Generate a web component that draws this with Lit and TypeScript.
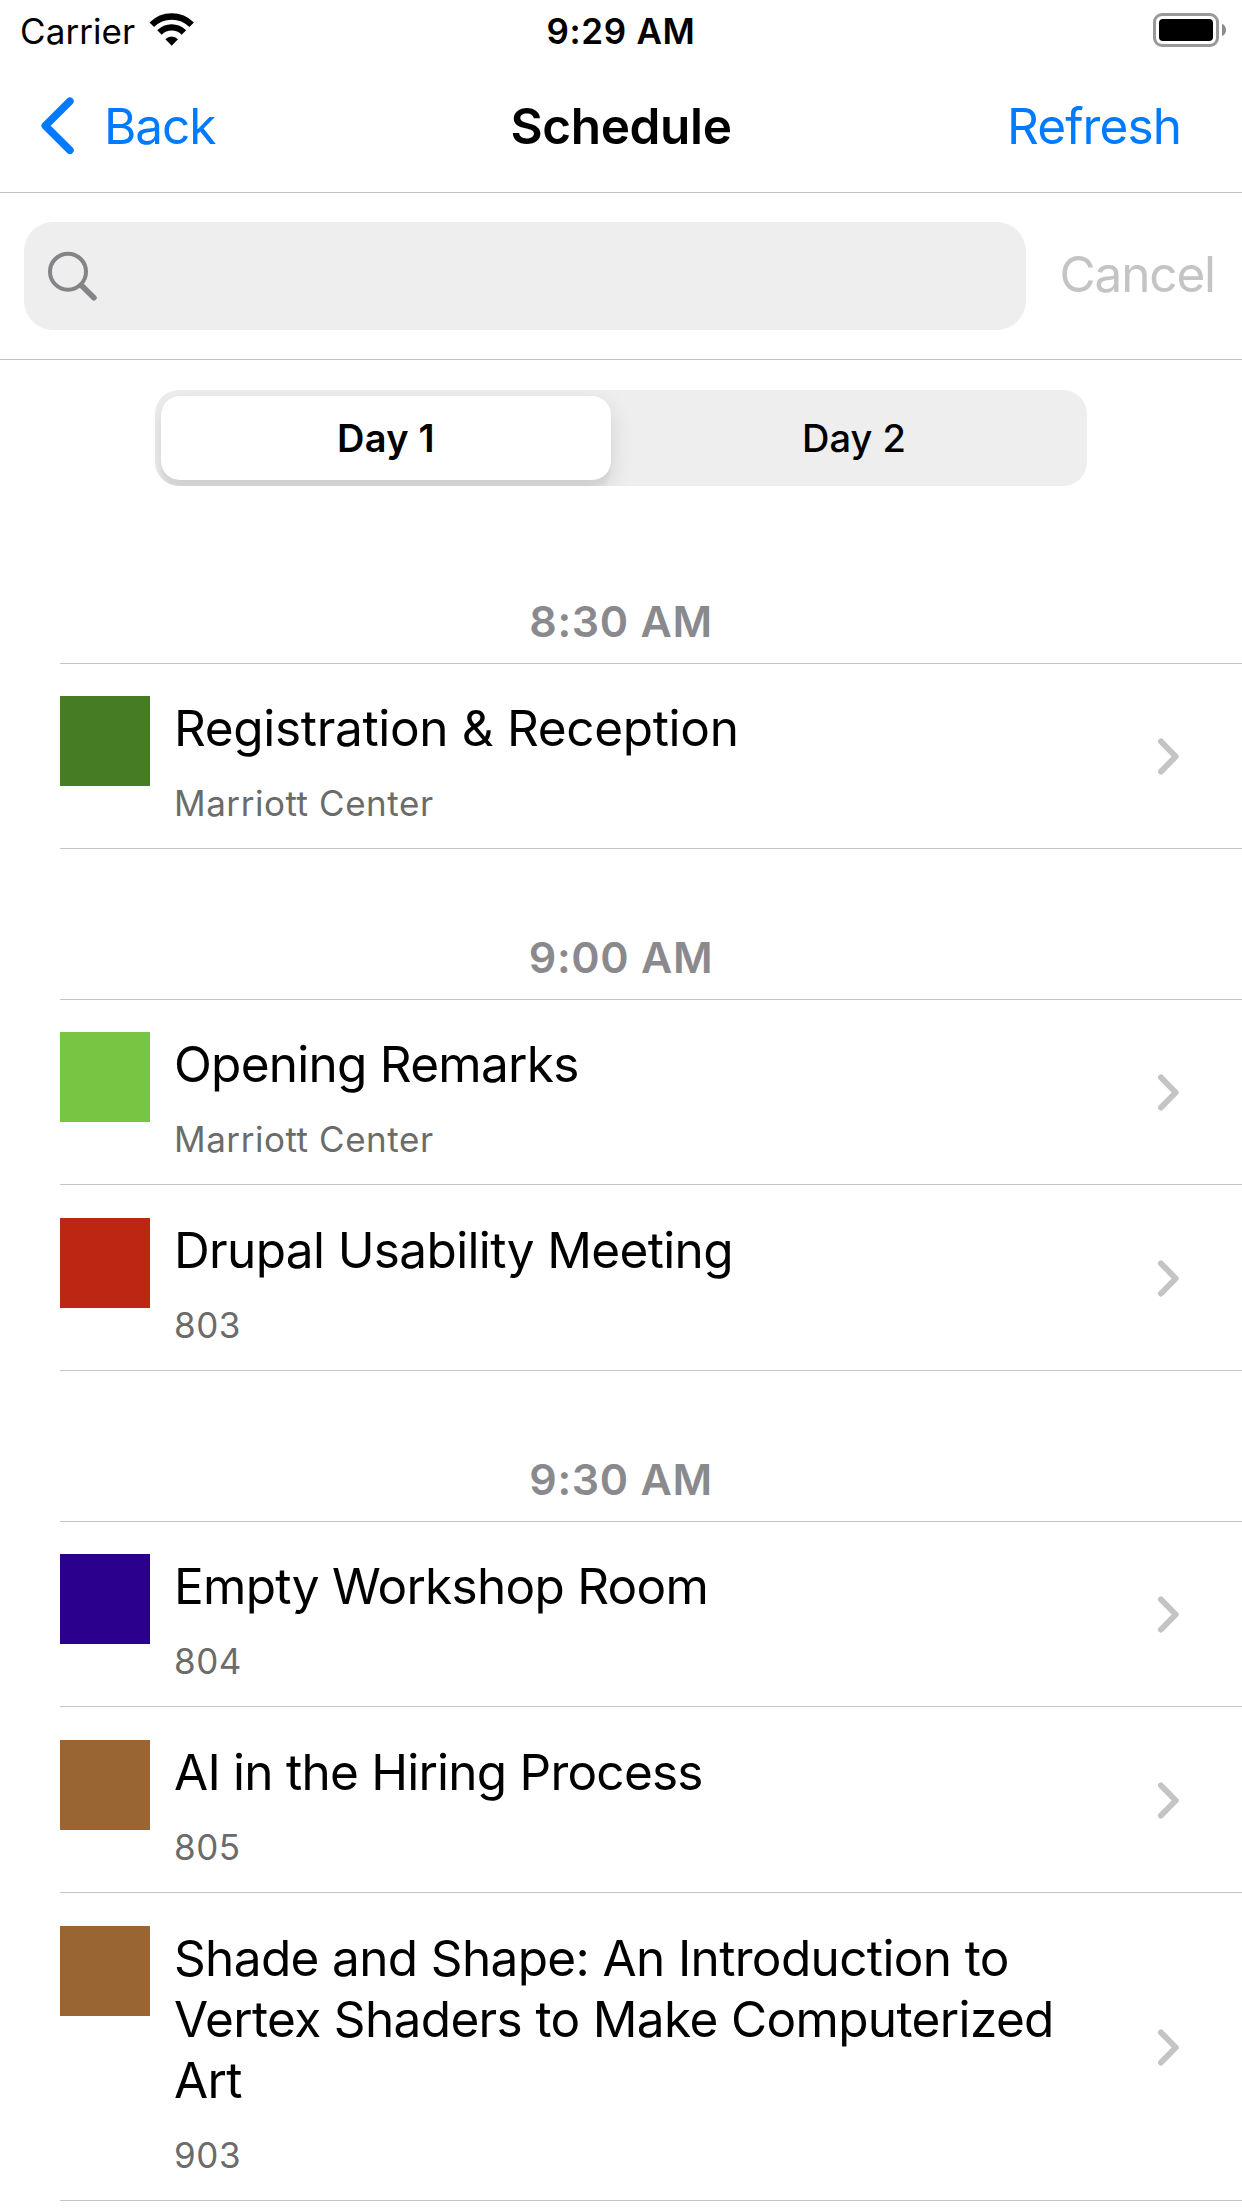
import { LitElement, html, css } from 'lit';
import { customElement, property, state } from 'lit/decorators.js';
import { classMap } from 'lit/directives/class-map.js';
import { styleMap } from 'lit/directives/style-map.js';

interface Session {
  title: string;
  room: string;
  color: string;
  tracking: number;
}

interface Slot {
  time: string;
  sessions: Session[];
}

const SLOTS: Slot[] = [
  {
    time: '8:30 AM',
    sessions: [
      { title: 'Registration & Reception', room: 'Marriott Center', color: '#467c24', tracking: -0.33 },
    ],
  },
  {
    time: '9:00 AM',
    sessions: [
      { title: 'Opening Remarks', room: 'Marriott Center', color: '#78c544', tracking: -0.74 },
      { title: 'Drupal Usability Meeting', room: '803', color: '#bc2713', tracking: -0.64 },
    ],
  },
  {
    time: '9:30 AM',
    sessions: [
      { title: 'Empty Workshop Room', room: '804', color: '#2b008c', tracking: -0.73 },
      { title: 'AI in the Hiring Process', room: '805', color: '#996633', tracking: -0.76 },
      {
        title: 'Shade and Shape: An Introduction to Vertex Shaders to Make Computerized Art',
        room: '903',
        color: '#996633',
        tracking: -0.64,
      },
    ],
  },
];

@customElement('status-bar')
class StatusBar extends LitElement {
  static styles = css`
    :host {
      display: grid;
      grid-template-columns: 1fr auto 1fr;
      align-items: start;
      height: 60px;
      padding: 0 16px 0 20px;
      box-sizing: border-box;
      font-size: 35px;
      line-height: 42px;
    }
    .left {
      display: flex;
      gap: 14px;
      padding-top: 10px;
      letter-spacing: 0.08px;
    }
    .wifi {
      width: 46px;
      height: 34px;
      margin-top: 3px;
    }
    .clock {
      padding-top: 10px;
      font-weight: 600;
      letter-spacing: 0.7px;
      transform: translateX(-2px);
    }
    .right {
      display: flex;
      justify-content: flex-end;
      padding-top: 13px;
    }
    .battery {
      width: 73px;
      height: 34px;
    }
  `;

  render() {
    return html`
      <div class="left">
        <span>Carrier</span>
        <svg class="wifi" viewBox="0 0 46 34" fill="none" stroke="#000" stroke-width="6.4">
          <path d="M2.76 11.76A28.2 28.2 0 0 1 42.64 11.76" />
          <path d="M10.47 19.47A17.3 17.3 0 0 1 34.93 19.47" />
          <path d="M16.4 26.2A8.8 8.8 0 0 1 29 26.2L22.7 32.7Z" fill="#000" stroke="none" />
        </svg>
      </div>
      <div class="clock">9:29 AM</div>
      <div class="right">
        <svg class="battery" viewBox="0 0 73 34">
          <rect x="1.5" y="1.5" width="63" height="31" rx="7.5" fill="none" stroke="#999" stroke-width="3" />
          <rect x="6" y="6" width="54" height="22" rx="4" fill="#000" />
          <path d="M69 10.8C71.6 12 73 14.2 73 17s-1.4 5-4 6.2Z" fill="#8c8c8c" />
        </svg>
      </div>
    `;
  }
}

@customElement('nav-bar')
class NavBar extends LitElement {
  static styles = css`
    :host {
      display: grid;
      grid-template-columns: 1fr auto 1fr;
      align-items: center;
      height: 133px;
      padding: 0 61px 0 40px;
      box-sizing: border-box;
      border-bottom: 1px solid #c3c3c5;
      font-size: 49.5px;
      line-height: 60px;
    }
    .back {
      display: flex;
      align-items: center;
      gap: 28px;
      color: #007aff;
      letter-spacing: -1.1px;
    }
    .arrow {
      width: 36px;
      height: 60px;
    }
    .title {
      font-weight: 600;
      letter-spacing: -0.36px;
      transform: translateX(10.5px);
    }
    .refresh {
      color: #007aff;
      letter-spacing: -0.92px;
      text-align: right;
    }
  `;

  render() {
    return html`
      <div class="back">
        <svg class="arrow" viewBox="0 0 36 60" fill="none" stroke="#007aff" stroke-width="7.6"
          stroke-linecap="round" stroke-linejoin="round">
          <path d="M29.9 5.3L5.3 29.8L29.9 54.2" />
        </svg>
        <span>Back</span>
      </div>
      <div class="title">Schedule</div>
      <div class="refresh">Refresh</div>
    `;
  }
}

@customElement('search-bar')
class SearchBar extends LitElement {
  static styles = css`
    :host {
      display: flex;
      align-items: center;
      gap: 33.5px;
      height: 167px;
      padding: 0 24px;
      box-sizing: border-box;
      border-bottom: 1px solid #c3c3c5;
    }
    .field {
      display: flex;
      align-items: center;
      width: 1002px;
      height: 108px;
      padding-left: 22px;
      box-sizing: border-box;
      border-radius: 29px;
      background: #eee;
    }
    .glass {
      width: 54px;
      height: 54px;
    }
    .cancel {
      padding-bottom: 4px;
      font-size: 49.5px;
      line-height: 60px;
      letter-spacing: -1.15px;
      color: #c4c4c4;
    }
  `;

  render() {
    return html`
      <div class="field">
        <svg class="glass" viewBox="0 0 54 54" fill="none" stroke="#848488">
          <circle cx="22" cy="22.7" r="18" stroke-width="4" />
          <path d="M35.3 36.2L47.9 48.8" stroke-width="5.6" stroke-linecap="round" />
        </svg>
      </div>
      <span class="cancel">Cancel</span>
    `;
  }
}

@customElement('day-switch')
class DaySwitch extends LitElement {
  @state() private selected = 0;

  static styles = css`
    :host {
      display: flex;
      justify-content: center;
      padding: 30px 0 27px;
    }
    .track {
      display: grid;
      grid-template-columns: 1fr 1fr;
      width: 932px;
      height: 96px;
      border-radius: 24px;
      background: #eee;
      overflow: hidden;
    }
    .segment {
      display: grid;
      place-items: center;
      font-size: 38px;
      line-height: 46px;
      font-weight: 500;
    }
    .active {
      margin: 6px 10px 6px 6px;
      border-radius: 19px;
      background: #fff;
      box-shadow: 0 9px 24px rgba(0, 0, 0, 0.12), 0 9px 3px rgba(0, 0, 0, 0.04);
      font-weight: 600;
      letter-spacing: 0.25px;
    }
  `;

  render() {
    return html`
      <div class="track">
        ${['Day 1', 'Day 2'].map(
          (label, i) => html`
            <div class=${classMap({ segment: true, active: i === this.selected })}
              @click=${() => (this.selected = i)}>${label}</div>
          `,
        )}
      </div>
    `;
  }
}

@customElement('session-row')
class SessionRow extends LitElement {
  @property({ attribute: false }) session!: Session;

  static styles = css`
    :host {
      display: grid;
      grid-template-columns: 90px 925px 1fr;
      margin-left: 60px;
      border-bottom: 1px solid #c4c4c6;
    }
    .swatch {
      width: 90px;
      height: 90px;
      margin-top: 33px;
    }
    .text {
      padding: 35px 0 24px 24px;
    }
    .title {
      font-size: 49.5px;
      line-height: 61px;
    }
    .room {
      margin-top: 23px;
      font-size: 35px;
      line-height: 42px;
      letter-spacing: 0.55px;
      color: #6b6b6b;
    }
    .chevron {
      width: 26px;
      height: 40px;
      align-self: center;
      margin-left: 80px;
    }
  `;

  render() {
    const { title, room, color, tracking } = this.session;
    return html`
      <div class="swatch" style=${styleMap({ background: color })}></div>
      <div class="text">
        <div class="title" style=${styleMap({ letterSpacing: `${tracking}px` })}>${title}</div>
        <div class="room">${room}</div>
      </div>
      <svg class="chevron" viewBox="0 0 26 40" fill="none" stroke="#c4c4c6" stroke-width="6"
        stroke-linecap="round" stroke-linejoin="round">
        <path d="M6 5.5L20.7 20.5L6 35.5" />
      </svg>
    `;
  }
}

@customElement('app-root')
class AppRoot extends LitElement {
  static styles = css`
    :host {
      display: block;
      height: 2208px;
      overflow: hidden;
      background: #fff;
      color: #000;
      font-family: Inter, 'Liberation Sans', sans-serif;
    }
    .time {
      display: flex;
      flex-direction: column;
      justify-content: flex-end;
      height: 151px;
      margin: 0 0 -1px 60px;
      padding: 0 60px 16px 0;
      box-sizing: border-box;
      border-bottom: 1px solid #c4c4c6;
      font-size: 43px;
      line-height: 52px;
      font-weight: 600;
      letter-spacing: 0.7px;
      text-align: center;
      color: #8a8a8e;
    }
  `;

  render() {
    return html`
      <status-bar></status-bar>
      <nav-bar></nav-bar>
      <search-bar></search-bar>
      <day-switch></day-switch>
      ${SLOTS.map(
        (slot) => html`
          <div class="time">${slot.time}</div>
          ${slot.sessions.map((s) => html`<session-row .session=${s}></session-row>`)}
        `,
      )}
    `;
  }
}
